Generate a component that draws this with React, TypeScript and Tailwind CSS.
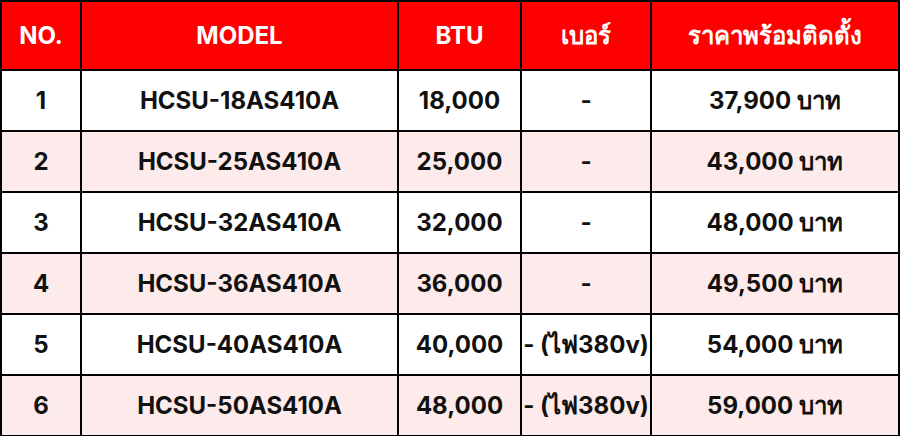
const rows = [
    {no: "1", model: "HCSU-18AS410A", btu: "18,000", label: "-", price: "37,900 บาท"},
    {no: "2", model: "HCSU-25AS410A", btu: "25,000", label: "-", price: "43,000 บาท"},
    {no: "3", model: "HCSU-32AS410A", btu: "32,000", label: "-", price: "48,000 บาท"},
    {no: "4", model: "HCSU-36AS410A", btu: "36,000", label: "-", price: "49,500 บาท"},
    {no: "5", model: "HCSU-40AS410A", btu: "40,000", label: "- (ไฟ380v)", price: "54,000 บาท"},
    {no: "6", model: "HCSU-50AS410A", btu: "48,000", label: "- (ไฟ380v)", price: "59,000 บาท"},
];

const App = () => {
    return (
        <div className="w-[900px] h-[436px] bg-white font-['Inter','Noto_Sans',sans-serif]">
            <table className="w-[900px] table-fixed border-collapse border-2 border-black">
                <colgroup>
                    <col className="w-[80px]"/>
                    <col className="w-[317px]"/>
                    <col className="w-[123px]"/>
                    <col className="w-[130px]"/>
                    <col/>
                </colgroup>
                <thead>
                <tr className="h-[69px] bg-[#ff0000] text-white text-[24px] font-bold">
                    <th className="border-2 border-black">NO.</th>
                    <th className="border-2 border-black">MODEL</th>
                    <th className="border-2 border-black">BTU</th>
                    <th className="border-2 border-black">เบอร์</th>
                    <th className="border-2 border-black">ราคาพร้อมติดตั้ง</th>
                </tr>
                </thead>
                <tbody>
                {rows.map((r, i) => (
                    <tr key={r.no}
                        className={`h-[61px] text-[24px] font-bold text-[#111] ${i % 2 ? "bg-[#fdeaea]" : "bg-white"}`}>
                        <td className="border-2 border-black text-center">{r.no}</td>
                        <td className="border-2 border-black text-center">{r.model}</td>
                        <td className="border-2 border-black text-center">{r.btu}</td>
                        <td className="border-2 border-black text-center whitespace-nowrap">{r.label}</td>
                        <td className="border-2 border-black text-center">{r.price}</td>
                    </tr>
                ))}
                </tbody>
            </table>
        </div>
    );
};

export default App;
